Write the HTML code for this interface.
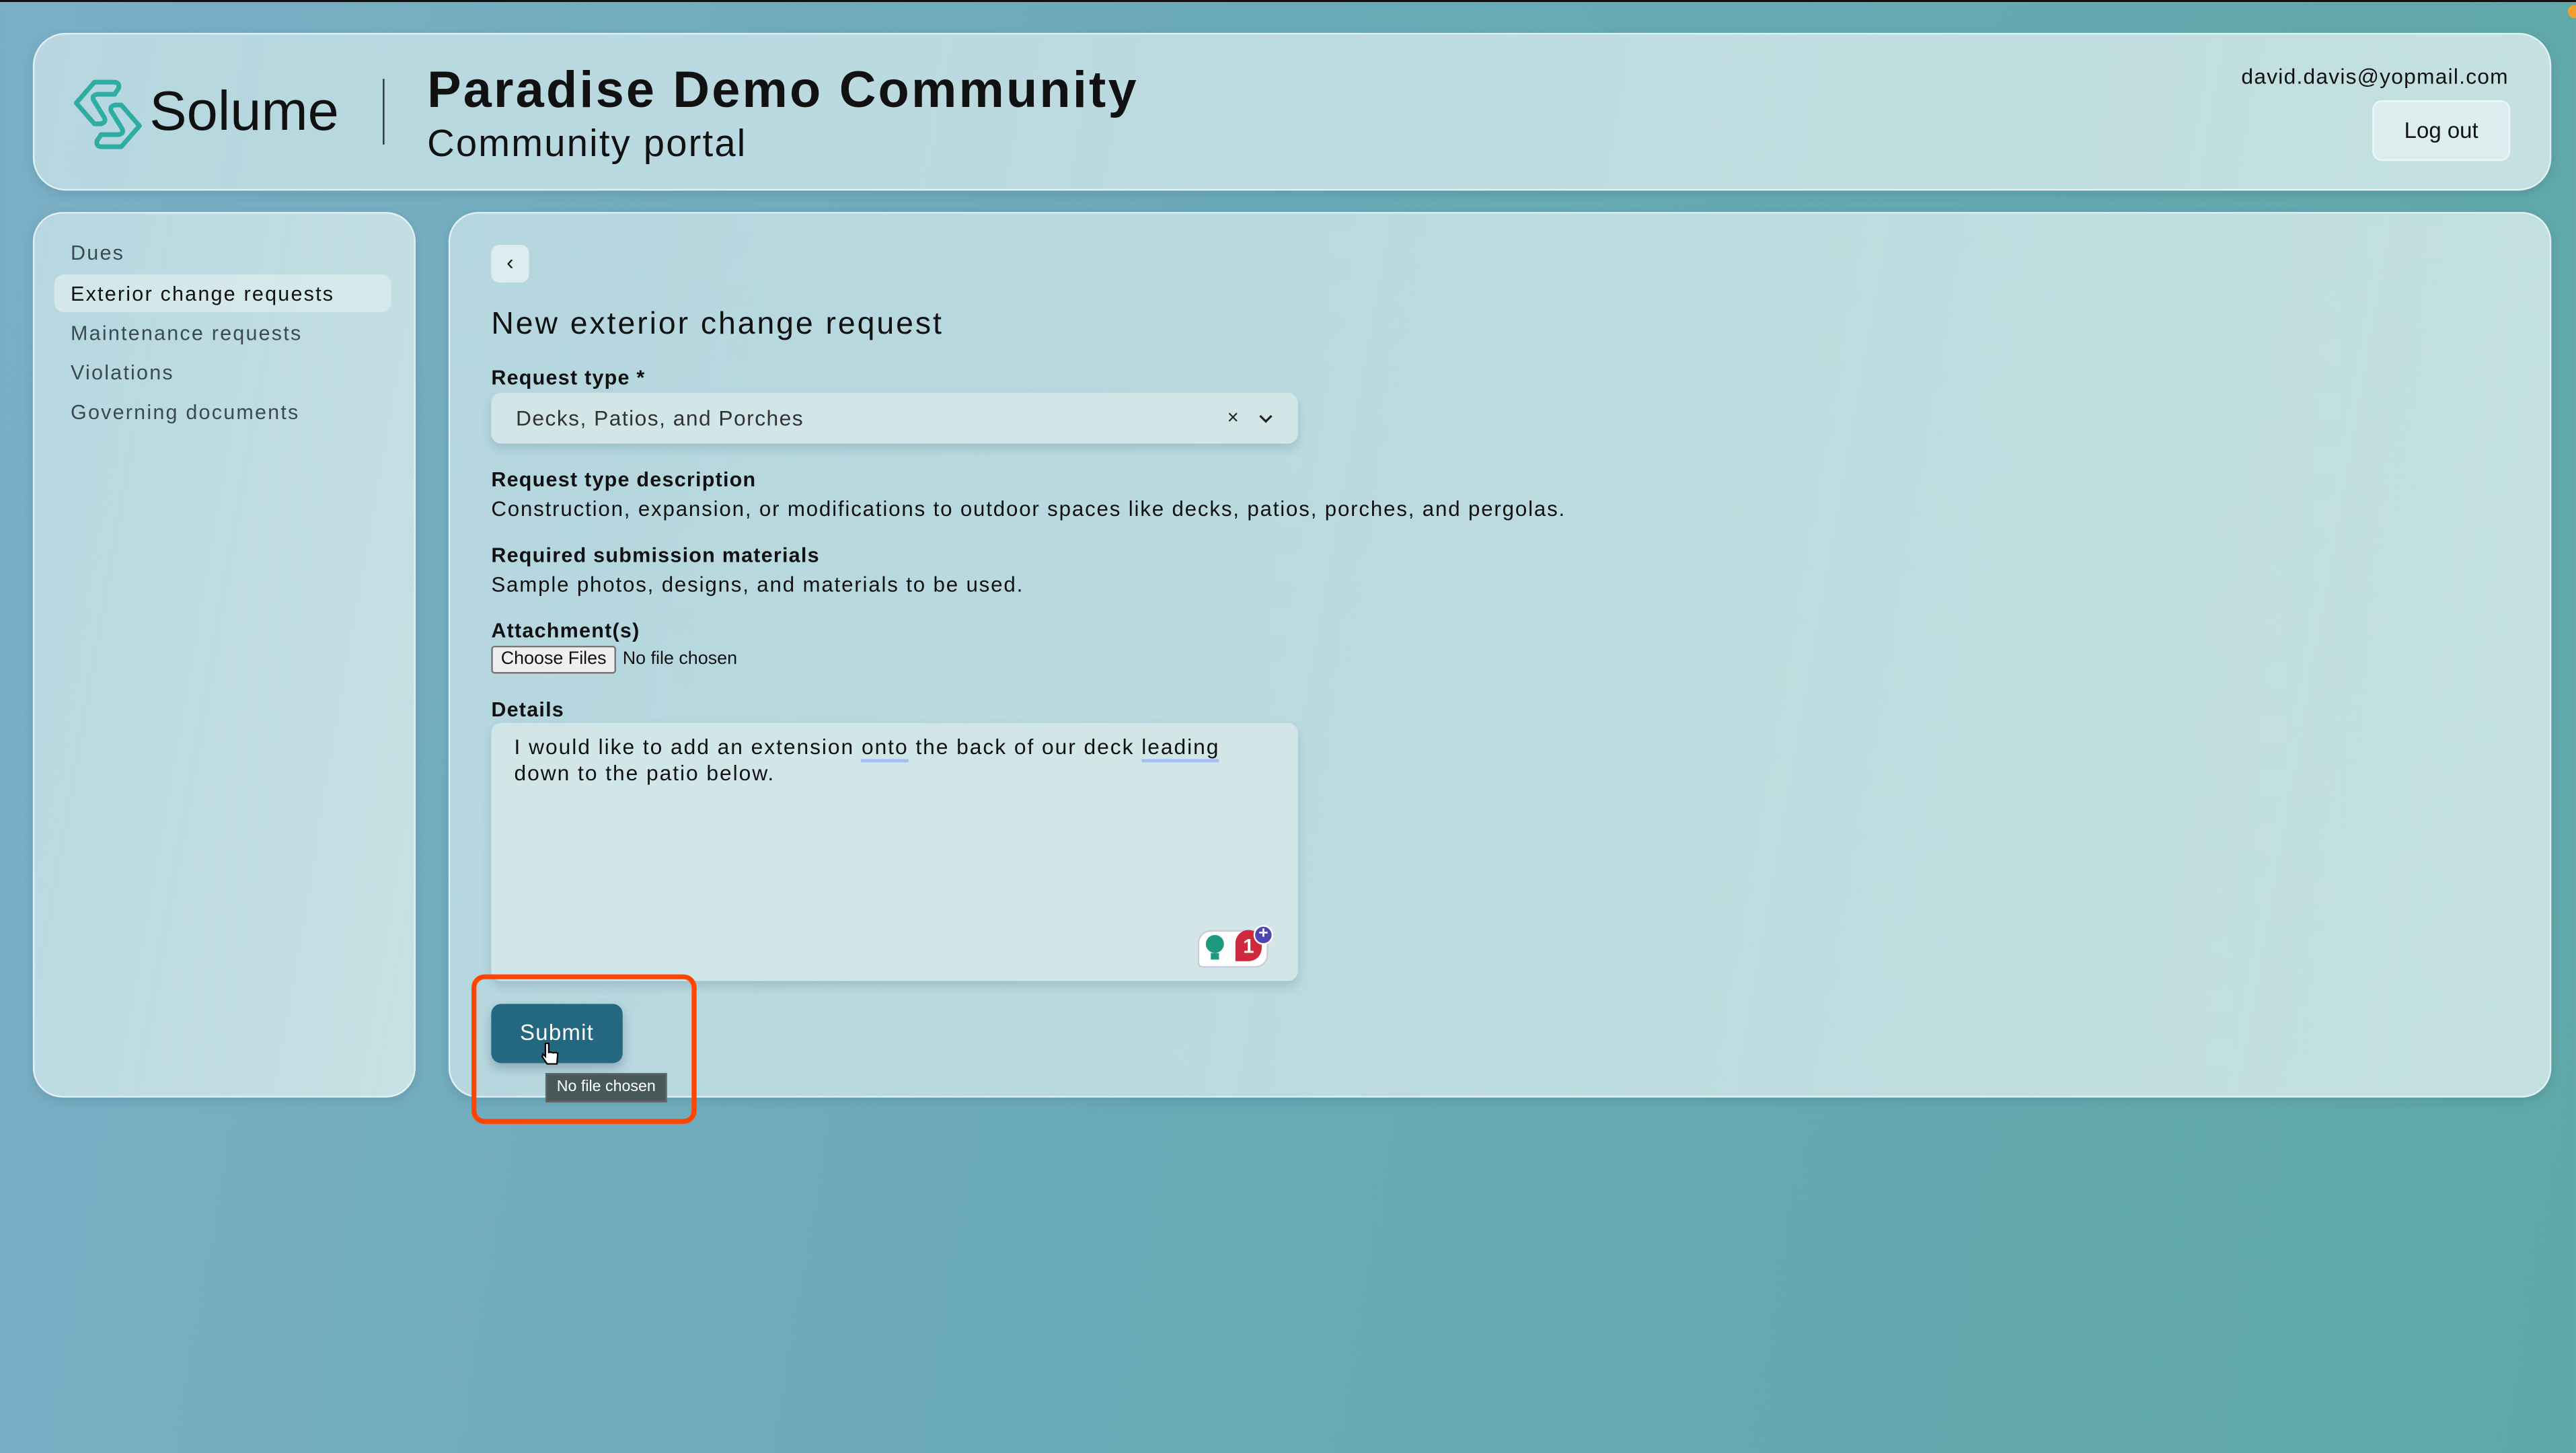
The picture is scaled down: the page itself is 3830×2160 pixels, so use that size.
<!DOCTYPE html>
<html><head><meta charset="utf-8"><style>
html,body{margin:0;padding:0;width:3830px;height:2160px;overflow:hidden}
body{background:linear-gradient(100deg,#7bafc6 0%,#6aaab8 45%,#5fa8a8 100%);font-family:"Liberation Sans",sans-serif;color:#111}
#top{position:absolute;left:0;top:0;width:3830px;height:3px;background:#111}
#s{position:absolute;left:0;top:0;width:1568px;height:884px;transform:scale(2.44260);transform-origin:0 0}
.p{position:absolute;background:linear-gradient(100deg,rgba(200,226,232,.78),rgba(214,234,234,.85));border:1px solid rgba(235,245,247,.8);box-shadow:0 2px 6px rgba(0,50,70,.12)}
.a{position:absolute;white-space:nowrap}
.nav{font-size:12.5px;color:#3b4a50;left:43px;letter-spacing:.9px}
.lb{font-weight:bold;font-size:12.5px;left:299px;letter-spacing:.5px}
.tx{font-size:12.8px;left:299px;letter-spacing:.75px}
</style></head><body>
<div id="top"></div>
<div id="s">
<div class="p" style="left:20px;top:20px;width:1531px;height:94px;border-radius:20px"></div>
<svg class="a" style="left:36.8px;top:40.9px" width="57.3" height="57.3" viewBox="0 0 140 140" fill="none" stroke="#2fada3" stroke-width="7" stroke-linejoin="round" stroke-linecap="round">
<path d="M80 40 L86 31 Q88 22 79 22 L50 22 L23 53 L50 84 L60 84"/>
<path d="M80 40 L54 40 Q45 42 49 49 L65 75 Q68 83 58 84"/>
<path d="M60 100 L54 109 Q52 118 61 118 L90 118 L117 87 L90 56 L80 56"/>
<path d="M60 100 L86 100 Q95 98 91 91 L75 65 Q72 57 82 56"/>
</svg>
<div class="a" style="left:91px;top:49px;font-size:34px;color:#111">Solume</div>
<div class="a" style="left:233px;top:48px;width:1px;height:40px;background:#333"></div>
<div class="a" style="left:260px;top:37px;font-size:31px;font-weight:bold;letter-spacing:1.3px">Paradise Demo Community</div>
<div class="a" style="left:260px;top:74px;font-size:23px;letter-spacing:.9px">Community portal</div>
<div class="a" style="right:41px;top:39px;font-size:13px;letter-spacing:.5px">david.davis@yopmail.com</div>
<div class="a" style="left:1444px;top:61px;width:82px;height:35px;border-radius:6px;background:rgba(232,242,243,.7);border:1px solid rgba(240,248,248,.8);font-size:13.5px;text-align:center;line-height:35px">Log out</div>

<div class="p" style="left:20px;top:129px;width:231px;height:537px;border-radius:18px"></div>
<div class="a" style="left:33px;top:167px;width:205px;height:23px;border-radius:6px;background:rgba(220,236,238,.75)"></div>
<div class="a nav" style="top:147px">Dues</div>
<div class="a nav" style="top:172px;color:#111">Exterior change requests</div>
<div class="a nav" style="top:196px">Maintenance requests</div>
<div class="a nav" style="top:220px">Violations</div>
<div class="a nav" style="top:244px">Governing documents</div>

<div class="p" style="left:273px;top:129px;width:1278px;height:537px;border-radius:18px"></div>
<div class="a" style="left:299px;top:149px;width:23px;height:23px;border-radius:5px;background:rgba(228,240,242,.85);font-size:13px;text-align:center;line-height:22px">&#8249;</div>
<div class="a" style="left:299px;top:187px;font-size:19px;color:#111;letter-spacing:1.2px">New exterior change request</div>
<div class="a lb" style="top:223px">Request type *</div>
<div class="a" style="left:299px;top:239px;width:491px;height:31px;border-radius:6px;background:rgba(214,232,234,.85);box-shadow:0 3px 6px rgba(0,50,70,.15)"></div>
<div class="a" style="left:314px;top:247px;font-size:13px;color:#333;letter-spacing:.6px">Decks, Patios, and Porches</div>
<div class="a" style="left:747px;top:247px;font-size:12px;color:#222">&#215;</div>
<svg class="a" style="left:766px;top:252px" width="9" height="6" viewBox="0 0 9 6"><path d="M1 1 L4.5 4.5 L8 1" stroke="#222" stroke-width="1.3" fill="none"/></svg>
<div class="a lb" style="top:285px">Request type description</div>
<div class="a tx" style="top:302px">Construction, expansion, or modifications to outdoor spaces like decks, patios, porches, and pergolas.</div>
<div class="a lb" style="top:331px">Required submission materials</div>
<div class="a tx" style="top:348px">Sample photos, designs, and materials to be used.</div>
<div class="a lb" style="top:377px">Attachment(s)</div>
<div class="a" style="left:299px;top:393px;width:74px;height:15px;border:1px solid #777;border-radius:2px;background:#efefef;font-size:11px;text-align:center;line-height:15px">Choose Files</div>
<div class="a" style="left:379px;top:395px;font-size:11px">No file chosen</div>
<div class="a lb" style="top:425px">Details</div>
<div class="a" style="left:299px;top:440px;width:491px;height:157px;border-radius:6px;background:rgba(214,232,234,.85);box-shadow:0 3px 6px rgba(0,50,70,.15)"></div>
<div class="a" style="left:313px;top:447px;font-size:13px;line-height:16px;letter-spacing:.8px">I would like to add an extension <span style="border-bottom:2px solid #9fbff5">onto</span> the back of our deck <span style="border-bottom:2px solid #9fbff5">leading</span><br>down to the patio below.</div>
<div class="a" style="left:729px;top:566px;width:41px;height:21px;border-radius:8px 6px 8px 3px;background:#fff;border:1px solid #ccd"></div>
<div class="a" style="left:734px;top:569px;width:11px;height:11px;border-radius:50%;background:#1e9a80"></div>
<div class="a" style="left:737px;top:580px;width:5px;height:4px;background:#1e9a80"></div>
<div class="a" style="left:752px;top:566px;width:16px;height:19px;border-radius:9px 9px 9px 0;background:#d0283c;color:#fff;font-weight:bold;font-size:12px;text-align:center;line-height:20px">1</div>
<div class="a" style="left:763px;top:563px;width:10px;height:10px;border-radius:50%;background:#5146b0;border:1px solid #fff;color:#fff;font-size:10px;line-height:9px;text-align:center;font-weight:bold">+</div>
<div class="a" style="left:299px;top:611px;width:80px;height:36px;border-radius:6px;background:#236880;box-shadow:0 3px 6px rgba(0,40,60,.25);color:#fff;font-size:13.5px;text-align:center;line-height:36px;letter-spacing:.5px">Submit</div>
<svg class="a" style="left:329px;top:634px" width="12" height="15" viewBox="0 0 12 15"><path d="M3 1 L3 9 L1.5 7.5 L1 9 L4 13.5 L10 13.5 L10.5 7 L9 6.5 L8 6.8 L6 6.3 L5 6.5 L5 1 Z" fill="#fff" stroke="#000" stroke-width=".9"/></svg>
<div class="a" style="left:332px;top:653px;width:72px;height:16px;background:#49585a;border:1px solid #666;color:#fff;font-size:9.5px;text-align:center;line-height:16px">No file chosen</div>
<div class="a" style="left:287px;top:593px;width:131px;height:85px;border:3px solid #ff4500;border-radius:8px"></div>
<div class="a" style="left:1563px;top:3px;width:8px;height:8px;border-radius:50%;background:#f0a030"></div>
</div>
</body></html>
